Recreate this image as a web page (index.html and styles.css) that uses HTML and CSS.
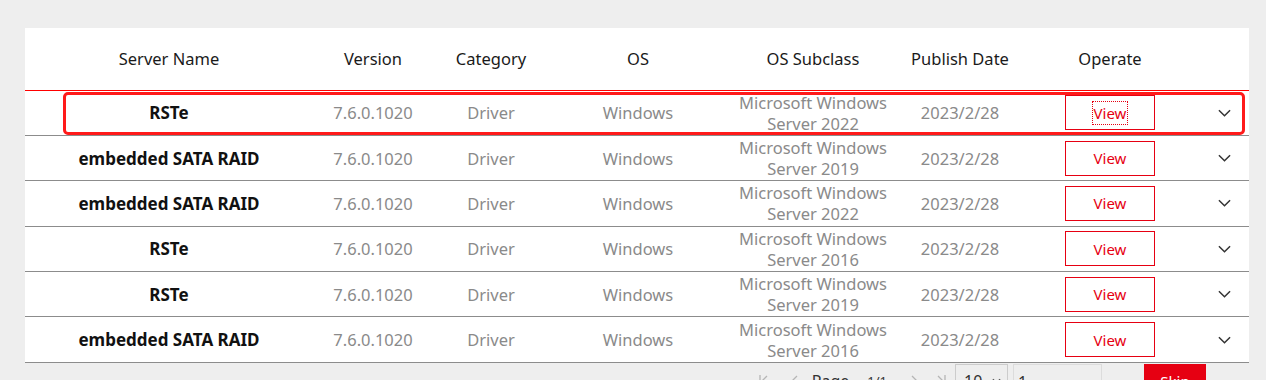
FILE: index.html
```html
<!DOCTYPE html>
<html lang="en">
<head>
    <meta charset="UTF-8">
    <meta name="viewport" content="width=device-width, initial-scale=1.0">
    <title>Driver Download</title>
    <link rel="stylesheet" href="styles.css">
</head>
<body>
    <div class="page">
        <div class="panel">
            <table class="server-table">
                <colgroup>
                    <col class="col-name">
                    <col class="col-version">
                    <col class="col-category">
                    <col class="col-os">
                    <col class="col-sub">
                    <col class="col-date">
                    <col class="col-op">
                    <col class="col-more">
                </colgroup>
                <thead>
                    <tr>
                        <th>Server Name</th>
                        <th>Version</th>
                        <th>Category</th>
                        <th>OS</th>
                        <th>OS Subclass</th>
                        <th>Publish Date</th>
                        <th>Operate</th>
                        <th></th>
                    </tr>
                </thead>
                <tbody>
                    <tr>
                        <td class="name">RSTe</td>
                        <td>7.6.0.1020</td>
                        <td>Driver</td>
                        <td>Windows</td>
                        <td class="sub">Microsoft Windows<br>Server 2022</td>
                        <td>2023/2/28</td>
                        <td><button class="btn-view"><span class="is-focus">View</span></button></td>
                        <td><svg class="chevron" viewBox="0 0 14 8"><path d="M1 1l6 6 6-6"/></svg></td>
                    </tr>
                    <tr>
                        <td class="name">embedded SATA RAID</td>
                        <td>7.6.0.1020</td>
                        <td>Driver</td>
                        <td>Windows</td>
                        <td class="sub">Microsoft Windows<br>Server 2019</td>
                        <td>2023/2/28</td>
                        <td><button class="btn-view">View</button></td>
                        <td><svg class="chevron" viewBox="0 0 14 8"><path d="M1 1l6 6 6-6"/></svg></td>
                    </tr>
                    <tr>
                        <td class="name">embedded SATA RAID</td>
                        <td>7.6.0.1020</td>
                        <td>Driver</td>
                        <td>Windows</td>
                        <td class="sub">Microsoft Windows<br>Server 2022</td>
                        <td>2023/2/28</td>
                        <td><button class="btn-view">View</button></td>
                        <td><svg class="chevron" viewBox="0 0 14 8"><path d="M1 1l6 6 6-6"/></svg></td>
                    </tr>
                    <tr>
                        <td class="name">RSTe</td>
                        <td>7.6.0.1020</td>
                        <td>Driver</td>
                        <td>Windows</td>
                        <td class="sub">Microsoft Windows<br>Server 2016</td>
                        <td>2023/2/28</td>
                        <td><button class="btn-view">View</button></td>
                        <td><svg class="chevron" viewBox="0 0 14 8"><path d="M1 1l6 6 6-6"/></svg></td>
                    </tr>
                    <tr>
                        <td class="name">RSTe</td>
                        <td>7.6.0.1020</td>
                        <td>Driver</td>
                        <td>Windows</td>
                        <td class="sub">Microsoft Windows<br>Server 2019</td>
                        <td>2023/2/28</td>
                        <td><button class="btn-view">View</button></td>
                        <td><svg class="chevron" viewBox="0 0 14 8"><path d="M1 1l6 6 6-6"/></svg></td>
                    </tr>
                    <tr>
                        <td class="name">embedded SATA RAID</td>
                        <td>7.6.0.1020</td>
                        <td>Driver</td>
                        <td>Windows</td>
                        <td class="sub">Microsoft Windows<br>Server 2016</td>
                        <td>2023/2/28</td>
                        <td><button class="btn-view">View</button></td>
                        <td><svg class="chevron" viewBox="0 0 14 8"><path d="M1 1l6 6 6-6"/></svg></td>
                    </tr>
                </tbody>
            </table>

            <!-- annotation box around the first row -->
            <div class="highlight"></div>
        </div>

        <div class="pager">
            <svg class="pager-icon icon-first" viewBox="0 0 9 12"><path d="M1 0v12M8 1L3 6l5 5"/></svg>
            <svg class="pager-icon icon-prev" viewBox="0 0 7 12"><path d="M6 1L1 6l5 5"/></svg>
            <span class="pager-label">Page</span>
            <span class="pager-count">1/1</span>
            <svg class="pager-icon icon-next" viewBox="0 0 7 12"><path d="M1 1l5 5-5 5"/></svg>
            <svg class="pager-icon icon-last" viewBox="0 0 9 12"><path d="M1 1l5 5-5 5M8 0v12"/></svg>
            <div class="pager-size">10 <svg class="size-arrow" viewBox="0 0 10 6"><path d="M1 1l4 4 4-4"/></svg></div>
            <div class="pager-input">1</div>
            <button class="btn-skip">Skip</button>
        </div>
    </div>
</body>
</html>
```

FILE: styles.css
```css
* {
    margin: 0;
    padding: 0;
    box-sizing: border-box;
}

body {
    font-family: "Noto Sans", "Open Sans", sans-serif;
    background: #eeeeee;
    color: #1a1a1a;
}

.page {
    padding: 28px 17px 0 25px;
}

.panel {
    position: relative;
    width: 1224px;
    background: #fff;
}

.server-table {
    width: 100%;
    border-collapse: collapse;
    table-layout: fixed;
    font-size: 16.5px;
}

.col-name { width: 288px; }
.col-version { width: 120px; }
.col-category { width: 116px; }
.col-os { width: 178px; }
.col-sub { width: 172px; }
.col-date { width: 122px; }
.col-op { width: 178px; }
.col-more { width: 50px; }

.server-table thead tr {
    border-bottom: 1px solid #ff0000;
}

.server-table th {
    height: 62px;
    font-weight: 400;
    color: #1a1a1a;
    text-align: center;
    vertical-align: middle;
}

.server-table tbody tr {
    border-bottom: 1px solid #8c8c8c;
}

.server-table td {
    height: 45.4px;
    padding: 0;
    text-align: center;
    vertical-align: middle;
    color: #8a8a8a;
    line-height: 21px;
}

.server-table td.name {
    color: #111;
    font-weight: 700;
    font-size: 17px;
}

.btn-view {
    width: 90px;
    height: 35px;
    border: 1px solid #e60012;
    background: #fff;
    color: #e60012;
    font-family: inherit;
    font-size: 15px;
    cursor: pointer;
}

.is-focus {
    outline: 1px dotted #e60012;
    outline-offset: 1px;
}

.chevron {
    width: 13px;
    height: 8px;
    fill: none;
    stroke: #333;
    stroke-width: 1.6;
    display: block;
    margin: 0 auto;
}

.highlight {
    position: absolute;
    left: 38px;
    top: 64px;
    width: 1182px;
    height: 43px;
    border: 3px solid #ff1a1a;
    border-radius: 5px;
    pointer-events: none;
}

.pager {
    width: 1224px;
    display: flex;
    justify-content: flex-end;
    align-items: center;
    padding: 1px 43px 0 0;
    font-size: 16px;
    color: #333;
}

.pager-icon {
    height: 12px;
    fill: none;
    stroke: #b5b5b5;
    stroke-width: 1.3;
}

.icon-first { width: 9px; }
.icon-prev { width: 7px; margin-left: 23px; }
.icon-next { width: 7px; margin-left: 24px; }
.icon-last { width: 9px; margin-left: 19px; }

.pager-label {
    line-height: 34px;
    margin-left: 14px;
}

.pager-count {
    line-height: 34px;
    font-size: 13px;
    margin-left: 18px;
}

.pager-size {
    display: flex;
    align-items: center;
    gap: 10px;
    width: 53px;
    height: 34px;
    margin-left: 9px;
    padding-left: 8px;
    border: 1px solid #ccc;
}

.size-arrow {
    width: 9px;
    height: 6px;
    fill: none;
    stroke: #555;
    stroke-width: 1.4;
}

.pager-input {
    width: 89px;
    height: 34px;
    margin-left: 5px;
    padding-left: 4px;
    line-height: 34px;
    border: 1px solid #dcdcdc;
}

.btn-skip {
    width: 62px;
    height: 34px;
    margin-left: 42px;
    border: none;
    background: #e60012;
    color: #fff;
    font-family: inherit;
    font-size: 15px;
}
```
